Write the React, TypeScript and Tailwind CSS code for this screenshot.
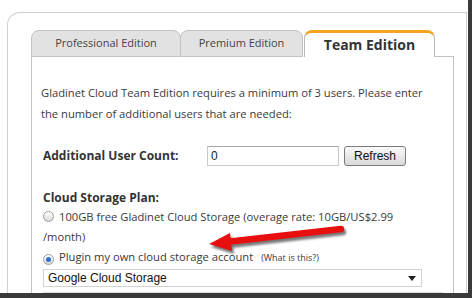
import React from "react";

function Radio({ checked }: { checked?: boolean }) {
  return (
    <span className="inline-flex items-center justify-center w-[11px] h-[11px] rounded-full border border-[#9b9b9b] bg-gradient-to-b from-[#ffffff] to-[#d8d8d8] align-[-1px] mr-[5px]">
      {checked ? <span className="block w-[5px] h-[5px] rounded-full bg-[#2f6fc4]" /> : null}
    </span>
  );
}

function Arrow() {
  return (
    <svg className="absolute left-0 top-0 pointer-events-none" width="472" height="298" viewBox="0 0 472 298">
      <defs>
        <filter id="bl" x="-20%" y="-50%" width="140%" height="200%">
          <feGaussianBlur stdDeviation="1.2" />
        </filter>
      </defs>
      <g transform="translate(2,3)" filter="url(#bl)" opacity="0.6">
        <line x1="341" y1="229" x2="226" y2="242" stroke="#222" strokeWidth="6.5" strokeLinecap="round" />
        <polygon points="209,244 230,233 232,251" fill="#222" />
      </g>
      <line x1="341" y1="229" x2="226" y2="242" stroke="#e80f0f" strokeWidth="6.5" strokeLinecap="round" />
      <polygon points="209,244 230,233 232,251" fill="#e80f0f" />
    </svg>
  );
}

export default function App() {
  return (
    <div className="relative w-[472px] h-[298px] overflow-hidden bg-white font-['Open_Sans',sans-serif] text-[#3a3a3a]">
      <div className="flex flex-col w-[472px] h-[298px] border-r-[4px] border-b-[5px] border-[#3a3a3a]">
        <div className="flex flex-col flex-1 pt-[12px] pl-[7px] pr-[1px] min-h-0">
          <div className="flex flex-col flex-1 min-h-0 border-l border-t border-r border-[#cfcfcf] rounded-tl-[13px] pt-[17px] pl-[23px] pr-[12px]">
            {/* tabs */}
            <div className="flex items-end h-[27px]">
              <div className="flex items-center justify-center w-[150px] h-[27px] bg-[#e2e2e2] border border-[#c2c2c2] rounded-t-[8px] text-[11px] text-[#444]">
                Professional Edition
              </div>
              <div className="flex items-center justify-center -ml-px w-[123px] h-[27px] bg-[#e2e2e2] border border-[#c2c2c2] rounded-t-[8px] text-[11px] text-[#444]">
                Premium Edition
              </div>
              <div className="flex items-center justify-center ml-[1px] w-[131px] h-[27px] bg-white border-t-[3px] border-t-[#f4a41e] border-l border-r border-[#b8b8b8] rounded-t-[8px] text-[14px] font-bold text-[#333] pb-[2px]">
                Team Edition
              </div>
              <div className="flex-1 h-[27px] border-b border-[#c2c2c2]" />
            </div>
            {/* content */}
            <div className="flex flex-col flex-1 border-l border-r border-[#c2c2c2] pl-[9px] pt-[25px]">
              <p className="text-[11.2px] leading-[21px]">
                Gladinet Cloud Team Edition requires a minimum of 3 users. Please enter
                <br />
                the number of additional users that are needed:
              </p>
              <div className="flex items-center mt-[22px] h-[20px] ml-[2px]">
                <div className="w-[164px] text-[12px] font-bold text-[#333]">Additional User Count:</div>
                <div className="flex items-center w-[132px] h-[20px] border border-[#c9c9c9] border-t-[#a9a9a9] pl-[3px] font-['Liberation_Sans',sans-serif] text-[12px] text-[#222]">
                  0
                </div>
                <div className="flex items-center justify-center ml-[5px] w-[62px] h-[20px] rounded-[3px] border border-[#7a7a7a] bg-gradient-to-b from-[#fafafa] to-[#d9d9d9] font-['Liberation_Sans',sans-serif] text-[12px] text-[#111]">
                  Refresh
                </div>
              </div>
              <div className="mt-[23px] ml-[2px] text-[12px] leading-[18px] font-bold text-[#333]">Cloud Storage Plan:</div>
              <p className="ml-[2px] text-[11.2px] leading-[20px]">
                <Radio />
                100GB free Gladinet Cloud Storage (overage rate: 10GB/US$2.99
                <br />
                /month)
                <br />
                <Radio checked />
                Plugin my own cloud storage account
                <span className="ml-[8px] text-[9px]">(What is this?)</span>
              </p>
              <div className="flex items-center justify-between ml-[2px] mt-[1px] w-[379px] h-[18px] border border-[#d2d2d2] pl-[4px] pr-[5px] font-['Liberation_Sans',sans-serif] text-[12px] text-[#111]">
                <span>Google Cloud Storage</span>
                <svg width="8" height="5" viewBox="0 0 8 5">
                  <polygon points="0,0 8,0 4,5" fill="#222" />
                </svg>
              </div>
              <div className="ml-[2px] mt-[5px] w-[400px] border-t border-[#dcdcdc]" />
            </div>
          </div>
        </div>
      </div>
      <Arrow />
    </div>
  );
}
